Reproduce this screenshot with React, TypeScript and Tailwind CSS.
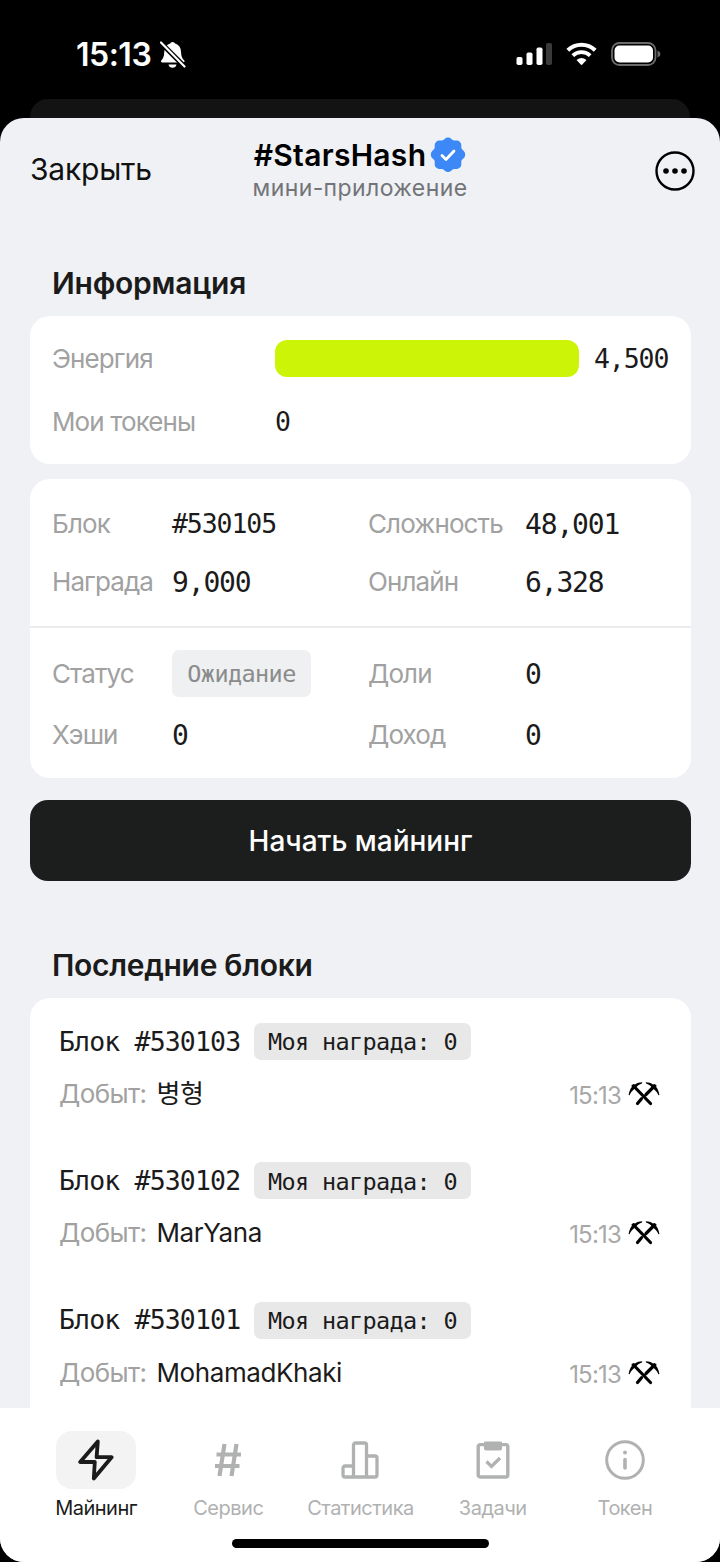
import clsx from "clsx";
import type { ReactNode } from "react";

type Block = {
  id: number;
  miner: string;
  time: string;
  reward: number;
};

type Tab = {
  label: string;
  icon: ReactNode;
  active?: boolean;
};

const blocks: Block[] = [
  { id: 530103, miner: "병형", time: "15:13", reward: 0 },
  { id: 530102, miner: "MarYana", time: "15:13", reward: 0 },
  { id: 530101, miner: "MohamadKhaki", time: "15:13", reward: 0 },
];

const BoltIcon = () => (
  <svg width="36" height="42" viewBox="0 0 36 42" fill="none">
    <path
      d="M19.8 2.5 2.2 23h14.6l-1 16.5L33.6 18.2H18.6Z"
      stroke="currentColor"
      strokeWidth="3.8"
      strokeLinejoin="round"
    />
  </svg>
);

const HashIcon = () => (
  <svg width="28" height="34" viewBox="0 0 28 34" fill="none">
    <path
      d="M10.5 1 5.5 33M22.5 1l-5 32M2.5 11.5H27M1 23h24.5"
      stroke="currentColor"
      strokeWidth="4.2"
    />
  </svg>
);

const ChartIcon = () => (
  <svg width="38" height="38" viewBox="0 0 38 38" fill="none">
    <path
      d="M12.5 36V4a2 2 0 0 1 2-2h9a2 2 0 0 1 2 2v32M12.5 25H4a2 2 0 0 0-2 2v7a2 2 0 0 0 2 2h30a2 2 0 0 0 2-2V17a2 2 0 0 0-2-2h-8.5"
      stroke="currentColor"
      strokeWidth="3.3"
    />
  </svg>
);

const TasksIcon = () => (
  <svg width="34" height="38" viewBox="0 0 34 38" fill="none">
    <rect x="2.2" y="3.6" width="29.6" height="32.4" rx="2" stroke="currentColor" strokeWidth="3.4" />
    <path d="M8 1.5Q8 .5 9 .5h16q1 0 1 1v6q0 2-2 2H10q-2 0-2-2Z" fill="currentColor" />
    <path d="m10.5 20.5 5 5 8.5-8.5" stroke="currentColor" strokeWidth="3.2" />
  </svg>
);

const InfoIcon = () => (
  <svg width="40" height="40" viewBox="0 0 40 40" fill="none">
    <circle cx="20" cy="20" r="18.3" stroke="currentColor" strokeWidth="3" />
    <circle cx="20" cy="12.5" r="2" fill="currentColor" />
    <path d="M20 19.5v8.5" stroke="currentColor" strokeWidth="3.6" strokeLinecap="round" />
  </svg>
);

const PickaxesIcon = () => (
  <svg width="32" height="26" viewBox="0 0 32 26" fill="none" className="text-black">
    <path
      d="M7.5 7 22.5 22.5M24.5 7l-6.5 6.5M13.500 17.800 9.500 22.500"
      stroke="currentColor"
      strokeWidth="3.2"
      strokeLinecap="round"
    />
    <path
      d="M.6 14C1.200 10.500 2.200 8 3.800 6L3.500 4.200 5.500 3l1.500.5C9 2 11.500 1.200 14.200 1.200L14 2.600C11.500 3.400 9.500 4.600 8.500 6L5.800 8.500C4 10 2.500 11.500 1.600 14.300ZM31.400 14C30.800 10.500 29.800 8 28.200 6l.3-1.800L26.500 3 25 3.500C23 2 20.500 1.200 17.800 1.200l.2 1.400c2.500.8 4.500 2 5.500 3.400l2.700 2.500c1.800 1.500 3.300 3 4.200 5.800Z"
      fill="currentColor"
    />
  </svg>
);

const VerifiedIcon = () => (
  <svg width="36" height="36" viewBox="0 0 36 36" fill="none">
    <path
      d="M14.8 1.8a4.5 4.5 0 0 1 6.4 0l1.3 1.3 2 .5h2.3a4.5 4.5 0 0 1 4.5 4.5v2.3l.5 1.5 1.8 1.9a5 5 0 0 1 0 7.4l-1.8 1.9-.5 1.5v2.8a4.5 4.5 0 0 1-4.5 4.5h-2.3l-2 .5-1.3 1.3a4.5 4.5 0 0 1-6.4 0l-1.3-1.3-2-.5H9.2a4.5 4.5 0 0 1-4.5-4.5v-2.8l-.5-1.5-1.8-1.9a5 5 0 0 1 0-7.4l1.8-1.9.5-1.5V8.1a4.5 4.5 0 0 1 4.5-4.5h2.3l2-.5Z"
      fill="#3b88f6"
    />
    <path
      d="m12 18.5 4 4 8-8.5"
      stroke="white"
      strokeWidth="2.8"
      strokeLinecap="round"
      strokeLinejoin="round"
    />
  </svg>
);

const MoreIcon = () => (
  <svg width="40" height="40" viewBox="0 0 40 40" fill="none">
    <circle cx="20" cy="20" r="18.5" stroke="black" strokeWidth="2.4" />
    <circle cx="11" cy="20" r="2.8" fill="black" />
    <circle cx="20" cy="20" r="2.8" fill="black" />
    <circle cx="29" cy="20" r="2.8" fill="black" />
  </svg>
);

const BellOffIcon = () => (
  <svg width="26" height="28" viewBox="0 0 26 28">
    <path
      d="M12.5 1q2 0 2.6 1.6 6 1.8 6 9 0 5 3.2 8 1 1.5-.8 1.900H2q-1.700-.3-.8-1.900 3-3 3-8 0-7 6-9Q10.500 1 12.500 1ZM8.500 23.500h8q-.8 3.200-4 3.200t-4-3.200Z"
      fill="white"
    />
    <path d="M.5 1.5 25 26" stroke="black" strokeWidth="5" />
    <path d="M1 1.5 24.5 25.5" stroke="white" strokeWidth="2.2" strokeLinecap="round" />
  </svg>
);

const SignalIcon = () => (
  <svg width="36" height="24" viewBox="0 0 36 24" fill="white">
    <rect x="0.5" y="15" width="6" height="8" rx="1.8" />
    <rect x="10.5" y="10.5" width="6" height="12.5" rx="1.8" />
    <rect x="20.5" y="5.5" width="6" height="17.5" rx="1.8" />
    <rect x="30" y="1" width="6" height="22" rx="1.8" fill="#3a3a3a" />
  </svg>
);

const WifiIcon = () => (
  <svg width="31" height="24" viewBox="0 0 31 24" fill="none">
    <path d="M1.8 8.2a19.8 19.8 0 0 1 27.4 0" stroke="white" strokeWidth="4" />
    <path d="M6.8 13.6a12.7 12.7 0 0 1 17.4 0" stroke="white" strokeWidth="3.8" />
    <path d="M10.5 18q5-3.8 10 0l-4.2 4.6q-.8.7-1.6 0Z" fill="white" />
  </svg>
);

const BatteryIcon = () => (
  <svg width="50" height="24" viewBox="0 0 50 24" fill="none">
    <rect x="1" y="1" width="43.5" height="22" rx="7.5" stroke="#6b6b6b" strokeWidth="1.8" />
    <rect x="3.5" y="3.5" width="38.5" height="17" rx="5" fill="white" />
    <path d="M46.5 8.5q3 1.2 3 3.5t-3 3.5Z" fill="#6b6b6b" />
  </svg>
);

const tabs: Tab[] = [
  { label: "Майнинг", icon: <BoltIcon />, active: true },
  { label: "Сервис", icon: <HashIcon /> },
  { label: "Статистика", icon: <ChartIcon /> },
  { label: "Задачи", icon: <TasksIcon /> },
  { label: "Токен", icon: <InfoIcon /> },
];

function StatusBar() {
  return (
    <div className="flex h-[99px] items-start justify-between pt-[35px] pr-[59px] pl-[76px]">
      <div className="flex items-center gap-[9px]">
        <span className="text-[32px] leading-[40px] font-semibold tracking-[-0.5px] text-white">
          15:13
        </span>
        <BellOffIcon />
      </div>
      <div className="flex h-[38px] items-center gap-[14px]">
        <SignalIcon />
        <WifiIcon />
        <BatteryIcon />
      </div>
    </div>
  );
}

function Header() {
  return (
    <header className="grid h-[130px] grid-cols-[1fr_auto_1fr] items-start px-[30px]">
      <span className="pt-[31px] text-[30px] leading-[40px] tracking-[-0.2px] text-[#111]">
        Закрыть
      </span>
      <div className="flex flex-col items-center pt-[19px]">
        <div className="flex h-[36px] items-center gap-[4px]">
          <span className="text-[30px] leading-[36px] font-semibold tracking-[0.3px] text-black">
            #StarsHash
          </span>
          <VerifiedIcon />
        </div>
        <span className="text-[23px] leading-[30px] tracking-[0.4px] text-[#737478]">
          мини-приложение
        </span>
      </div>
      <div className="-mr-[5px] flex justify-end pt-[33px]">
        <MoreIcon />
      </div>
    </header>
  );
}

function Label({ children }: { children: ReactNode }) {
  return (
    <span className="text-[26px] leading-[36px] tracking-[-0.9px] text-[#a1a1a1]">{children}</span>
  );
}

function Value({ children, small }: { children: ReactNode; small?: boolean }) {
  return (
    <span
      className={clsx(
        "font-['DejaVu_Sans_Mono',monospace] text-[#1b1b1b]",
        small
          ? "text-[26.5px] leading-[36px] tracking-[-1.1px]"
          : "pt-px text-[28px] leading-[35px] tracking-[-1.15px]"
      )}
    >
      {children}
    </span>
  );
}

function BlockRow({ block }: { block: Block }) {
  return (
    <div className="flex h-[139.3px] flex-col">
      <div className="flex h-[37px] items-center gap-[14px] font-['DejaVu_Sans_Mono',monospace] text-[#1b1b1b]">
        <span className="w-[181px] text-[26.5px] leading-[36px] tracking-[-0.85px]">
          Блок #{block.id}
        </span>
        <span className="flex h-[37px] w-[217px] items-center rounded-[7px] bg-[#e8e8e8] pt-[3px] pl-[14px] text-[23.5px] tracking-[-0.65px]">
          Моя награда: {block.reward}
        </span>
      </div>
      <div className="mt-[15px] flex h-[38px] items-center justify-between">
        <div className="flex gap-[10px] text-[26px] leading-[36px]">
          <span className="tracking-[-0.6px] text-[#a1a1a1]">Добыт:</span>
          <span className="tracking-[-0.4px] text-[#1b1b1b]">{block.miner}</span>
        </div>
        <div className="flex items-center gap-[7px]">
          <span className="pt-[4px] text-[24px] leading-[36px] tracking-[-0.8px] text-[#a8a8a8]">
            {block.time}
          </span>
          <PickaxesIcon />
        </div>
      </div>
    </div>
  );
}

function TabBar() {
  return (
    <nav className="absolute inset-x-0 bottom-0 flex h-[154px] flex-col items-center bg-white">
      <div className="grid w-full grid-cols-5 pt-[23px] pr-[29px] pl-[30px]">
        {tabs.map((tab) => (
          <div
            key={tab.label}
            className={clsx(
              "flex flex-col items-center",
              tab.active ? "text-[#1b1b1b]" : "text-[#b0b1b1]"
            )}
          >
            <div
              className={clsx(
                "flex h-[58px] w-[80px] items-center justify-center rounded-[16px]",
                tab.active && "bg-[#f3f3f3]"
              )}
            >
              {tab.icon}
            </div>
            <span className="mt-[4px] text-[20px] leading-[30px] tracking-[-0.5px]">
              {tab.label}
            </span>
          </div>
        ))}
      </div>
      <div className="mt-[16px] h-[9px] w-[257px] rounded-full bg-black" />
    </nav>
  );
}

export default function App() {
  return (
    <div className="flex h-[1562px] w-[720px] flex-col overflow-hidden bg-black font-[Inter,'Noto_Sans_CJK_KR',sans-serif] whitespace-nowrap">
      <StatusBar />
      <div className="mx-[30px] h-[19px] shrink-0 rounded-t-[18px] bg-[#131313]" />
      <div className="relative flex h-[1444px] shrink-0 flex-col overflow-hidden rounded-[24px] bg-[#eff1f5]">
        <Header />
        <main className="flex flex-col pr-[29px] pl-[30px]">
          <h2 className="mt-[15px] pl-[22px] text-[30px] leading-[40px] font-semibold tracking-[-0.25px] text-[#1b1b1b]">
            Информация
          </h2>
          <section className="mt-[13px] flex h-[148px] flex-col rounded-[20px] bg-white px-[22px] pt-[24px]">
            <div className="grid h-[37px] grid-cols-[223px_304px_1fr] items-center">
              <Label>Энергия</Label>
              <div className="h-[37px] rounded-[12px] bg-[#cbf406]" />
              <span className="pt-px pl-[15px]">
                <Value small>4,500</Value>
              </span>
            </div>
            <div className="mt-[26px] grid h-[37px] grid-cols-[223px_1fr] items-center">
              <Label>Мои токены</Label>
              <Value small>0</Value>
            </div>
          </section>
          <section className="mt-[15px] h-[299px] rounded-[20px] bg-white">
            <div className="grid h-[149px] grid-cols-[120px_196px_157px_1fr] content-start gap-y-[22px] border-b-2 border-[#ececee] pt-[27px] pl-[22px]">
              <Label>Блок</Label>
              <Value small>#530105</Value>
              <Label>Сложность</Label>
              <Value>48,001</Value>
              <Label>Награда</Label>
              <Value>9,000</Value>
              <Label>Онлайн</Label>
              <Value>6,328</Value>
            </div>
            <div className="grid grid-cols-[120px_196px_157px_1fr] grid-rows-[47px_36px] items-center gap-y-[20px] pt-[22px] pl-[22px]">
              <Label>Статус</Label>
              <span className="flex h-[47px] w-[139px] items-center justify-center rounded-[7px] bg-[#eef0f1] pt-[2px] font-['DejaVu_Sans_Mono',monospace] text-[23.5px] tracking-[-0.6px] text-[#8a8b8c]">
                Ожидание
              </span>
              <Label>Доли</Label>
              <Value>0</Value>
              <Label>Хэши</Label>
              <Value>0</Value>
              <Label>Доход</Label>
              <Value>0</Value>
            </div>
          </section>
          <button className="mt-[22px] h-[81px] rounded-[18px] bg-[#1c1d1d] text-[28px] font-medium text-white">
            Начать майнинг
          </button>
          <h2 className="mt-[64px] pl-[22px] text-[30px] leading-[40px] font-semibold tracking-[-0.3px] text-[#1b1b1b]">
            Последние блоки
          </h2>
          <section className="mt-[13px] rounded-t-[20px] bg-white pt-[25px] pr-[31px] pl-[29px]">
            {blocks.map((block) => (
              <BlockRow key={block.id} block={block} />
            ))}
          </section>
        </main>
        <TabBar />
      </div>
    </div>
  );
}
